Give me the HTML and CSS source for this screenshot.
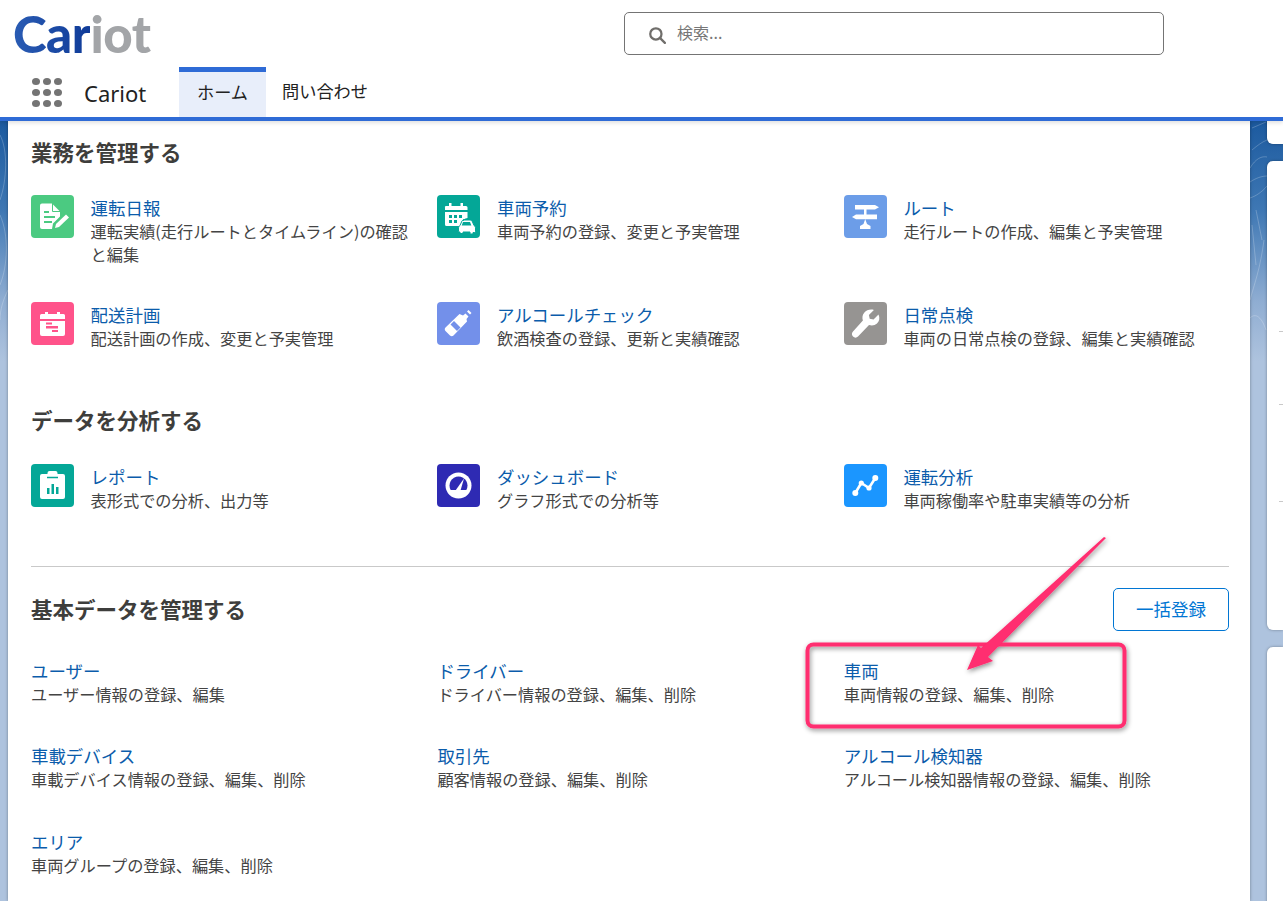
FILE: index.html
```html
<!DOCTYPE html>
<html lang="ja">
<head>
    <meta charset="UTF-8">
    <title>Cariot</title>
    <link rel="stylesheet" href="styles.css">
</head>
<body>
    <header class="header">
        <div class="top-row">
            <div class="logo"><span class="logo-blue">Car</span><span class="logo-gray">iot</span></div>
            <div class="search">
                <svg class="search-icon" viewBox="0 0 16 16"><circle cx="7" cy="7" r="5" fill="none" stroke="#706e6b" stroke-width="2"/><path d="M10.8 10.8L15 15" stroke="#706e6b" stroke-width="2" stroke-linecap="round"/></svg>
                <span class="search-text">検索...</span>
            </div>
        </div>
        <nav class="nav">
            <div class="waffle">
                <i></i><i></i><i></i><i></i><i></i><i></i><i></i><i></i><i></i>
            </div>
            <div class="app-name">Cariot</div>
            <a class="tab tab-active">ホーム</a>
            <a class="tab">問い合わせ</a>
        </nav>
    </header>

    <div class="page">
        <svg class="contours" viewBox="0 0 1283 340" preserveAspectRatio="none">
            <g fill="none" stroke="#ffffff" stroke-opacity="0.22" stroke-width="1">
                <path d="M0 135C8 150 7 180 0 200"/>
                <path d="M0 215C9 235 8 265 0 285"/>
                <path d="M8 290C3 300 0 310 0 320"/>
                <path d="M1252 150C1258 145 1262 142 1267 140"/>
                <path d="M1250 168C1256 158 1262 156 1267 157"/>
                <path d="M1250 182C1256 178 1262 176 1267 176"/>
                <path d="M1250 198C1256 196 1262 192 1267 186"/>
                <path d="M1256 210L1262 240"/>
                <path d="M1252 225L1256 265"/>
                <path d="M1264 240C1260 270 1254 285 1250 300"/>
                <path d="M1250 318C1256 312 1262 318 1266 330"/>
                <path d="M1252 128L1266 122"/>
            </g>
        </svg>

        <aside class="side-cards">
            <div class="side-card side-top"></div>
            <div class="side-card side-mid">
                <hr class="side-line side-line-1">
                <hr class="side-line side-line-2">
                <hr class="side-line side-line-3">
            </div>
            <div class="side-card side-bottom"></div>
        </aside>

        <main class="card">
            <h2 class="section-title">業務を管理する</h2>
            <div class="grid grid-tasks">
                <div class="item">
                    <span class="icon icon-green">
                        <svg viewBox="0 0 43 43"><path d="M11 8.500h10l8 8v5l-7 7-1 5.500H11a2 2 0 0 1-2-2V10.500a2 2 0 0 1 2-2z" fill="#fff"/><path d="M21.500 8v8.500H29" fill="none" stroke="#4bca81" stroke-width="1"/><path d="M13 17h5M13 22h11M13 27h8" stroke="#4bca81" stroke-width="2"/><path d="M24 33l1-4 10-9.500 3 3-10 9.500z" fill="#fff"/></svg>
                    </span>
                    <div class="item-text">
                        <a class="item-title">運転日報</a>
                        <p class="item-desc">運転実績(走行ルートとタイムライン)の確認と編集</p>
                    </div>
                </div>
                <div class="item">
                    <span class="icon icon-teal">
                        <svg viewBox="0 0 43 43"><path d="M9 11h3V8h2.500v3h9V8H26v3h3a1.500 1.500 0 0 1 1.500 1.500V15H8v-2.500A1 1 0 0 1 9 11z" fill="#fff"/><path d="M8 17h22.500v6c-3 .5-5 2-6 4l-1 4H9.500A1.500 1.500 0 0 1 8 29.500z" fill="#fff"/><path d="M12 20h3v3h-3zM17 20h3v3h-3zM22 20h3v3h-3zM12 25h3v3h-3zM17 25h3v3h-3z" fill="#04a797"/><path d="M26 25h7c1 0 2 .7 2.500 2l1.500 3.500c1 .5 1.500 1.500 1.500 2.500v3.500c0 .5-.5 1-1 1H36v1.500h-3V37h-7v1.500h-3V37h-.5c-.5 0-1-.5-1-1v-3c0-1 .5-2 1.500-2.500l1.500-3.500c.5-1.300 1-2 2.500-2z" fill="#fff" stroke="#04a797" stroke-width="1"/><path d="M26 27h7l1.300 3.500H24.700z" fill="#04a797"/></svg>
                    </span>
                    <div class="item-text">
                        <a class="item-title">車両予約</a>
                        <p class="item-desc">車両予約の登録、変更と予実管理</p>
                    </div>
                </div>
                <div class="item">
                    <span class="icon icon-sky">
                        <svg viewBox="0 0 43 43"><polygon points="11,10 31,10 35,12.300 31,14.500 11,14.500" fill="#fff"/><polygon points="12,19.500 33,19.500 33,24.300 12,24.300 8,22" fill="#fff"/><rect x="20" y="14" width="2.500" height="6" fill="#fff"/><polygon points="21.200,24 23,29 26.500,31 26.500,34 16,34 16,31 19.500,29" fill="#fff"/></svg>
                    </span>
                    <div class="item-text">
                        <a class="item-title">ルート</a>
                        <p class="item-desc">走行ルートの作成、編集と予実管理</p>
                    </div>
                </div>
                <div class="item">
                    <span class="icon icon-pink">
                        <svg viewBox="0 0 43 43"><path d="M10.500 12h3.500v-2h3v2h9v-2h3v2h3.500a1.500 1.500 0 0 1 1.500 1.500V17H9v-3.500a1.500 1.500 0 0 1 1.500-1.500z" fill="#fff"/><path d="M9 19h25v13a2 2 0 0 1-2 2H11a2 2 0 0 1-2-2z" fill="#fff"/><path d="M15 20.500h6v2h-6zM15 24h12v2.500H15zM21 28h6v2h-6z" fill="#ff538a"/></svg>
                    </span>
                    <div class="item-text">
                        <a class="item-title">配送計画</a>
                        <p class="item-desc">配送計画の作成、変更と予実管理</p>
                    </div>
                </div>
                <div class="item">
                    <span class="icon icon-periwinkle">
                        <svg viewBox="0 0 43 43"><path d="M26 13.500l2.500-2 3 3-2 2.500 .5 2.500-13.500 14c-1 1-2.500 1-3.500 0l-4.500-4.500c-1-1-1-2.500 0-3.500l14-13.500z" fill="#fff"/><path d="M30 9.500l1.500-1.500 3 3-1.500 1.500z" fill="#fff"/><path d="M17 19l6.500 6.500-3.500 3.500-6.500-6.500z" fill="#7390ea"/></svg>
                    </span>
                    <div class="item-text">
                        <a class="item-title">アルコールチェック</a>
                        <p class="item-desc">飲酒検査の登録、更新と実績確認</p>
                    </div>
                </div>
                <div class="item">
                    <span class="icon icon-gray">
                        <svg viewBox="0 0 43 43"><path d="M34.500 12.500l-5 5-3.800-.8-.8-3.800 5-5c-3.500-1-7.500 0-9.500 2.500-2 2.200-2.500 5.200-1.500 8L9 29.500c-1.500 1.500-1.500 3.500 0 5s3.500 1.500 5 0L25 23c2.800 1 5.800.5 8-1.500 2.500-2.500 3-5.500 1.500-9z" fill="#fff"/></svg>
                    </span>
                    <div class="item-text">
                        <a class="item-title">日常点検</a>
                        <p class="item-desc">車両の日常点検の登録、編集と実績確認</p>
                    </div>
                </div>
            </div>

            <h2 class="section-title title-analysis">データを分析する</h2>
            <div class="grid grid-analysis">
                <div class="item">
                    <span class="icon icon-teal">
                        <svg viewBox="0 0 43 43"><path d="M11 10h5.500V9a2 2 0 0 1 2-2h6a2 2 0 0 1 2 2v1H32a2 2 0 0 1 2 2v21a2 2 0 0 1-2 2H11a2 2 0 0 1-2-2V12a2 2 0 0 1 2-2z" fill="#fff"/><path d="M16 13.500h11" stroke="#04a797" stroke-width="1.500"/><path d="M16 24h2.500v6H16zM20.500 20h2.500v10h-2.500zM25 23h2.500v7H25z" fill="#04a797"/></svg>
                    </span>
                    <div class="item-text">
                        <a class="item-title">レポート</a>
                        <p class="item-desc">表形式での分析、出力等</p>
                    </div>
                </div>
                <div class="item">
                    <span class="icon icon-navy">
                        <svg viewBox="0 0 43 43"><circle cx="21.500" cy="21.500" r="13" fill="#fff"/><path d="M13.700 26A9 9 0 1 1 29.300 26z" fill="#2e2ab3"/><path d="M27 14.500L23.500 26.500H18.500z" fill="#fff"/></svg>
                    </span>
                    <div class="item-text">
                        <a class="item-title">ダッシュボード</a>
                        <p class="item-desc">グラフ形式での分析等</p>
                    </div>
                </div>
                <div class="item">
                    <span class="icon icon-blue">
                        <svg viewBox="0 0 43 43"><path d="M11.300 29L17.300 19L25 24L31.300 14" fill="none" stroke="#fff" stroke-width="2.600"/><circle cx="11.300" cy="29" r="3" fill="#fff"/><circle cx="17.300" cy="19" r="2.600" fill="#fff"/><circle cx="25" cy="24" r="2.600" fill="#fff"/><circle cx="31.300" cy="14" r="3" fill="#fff"/></svg>
                    </span>
                    <div class="item-text">
                        <a class="item-title">運転分析</a>
                        <p class="item-desc">車両稼働率や駐車実績等の分析</p>
                    </div>
                </div>
            </div>

            <hr class="divider">

            <div class="section-head">
                <h2 class="section-title">基本データを管理する</h2>
                <button class="bulk-btn">一括登録</button>
            </div>
            <div class="grid grid-basic">
                <div class="basic-item">
                    <a class="item-title">ユーザー</a>
                    <p class="item-desc">ユーザー情報の登録、編集</p>
                </div>
                <div class="basic-item">
                    <a class="item-title">ドライバー</a>
                    <p class="item-desc">ドライバー情報の登録、編集、削除</p>
                </div>
                <div class="basic-item">
                    <a class="item-title">車両</a>
                    <p class="item-desc">車両情報の登録、編集、削除</p>
                </div>
                <div class="basic-item">
                    <a class="item-title">車載デバイス</a>
                    <p class="item-desc">車載デバイス情報の登録、編集、削除</p>
                </div>
                <div class="basic-item">
                    <a class="item-title">取引先</a>
                    <p class="item-desc">顧客情報の登録、編集、削除</p>
                </div>
                <div class="basic-item">
                    <a class="item-title">アルコール検知器</a>
                    <p class="item-desc">アルコール検知器情報の登録、編集、削除</p>
                </div>
                <div class="basic-item">
                    <a class="item-title">エリア</a>
                    <p class="item-desc">車両グループの登録、編集、削除</p>
                </div>
            </div>
        </main>
    </div>

    <!-- 注釈 -->
    <svg class="annotation" viewBox="0 0 1283 901">
        <defs>
            <filter id="note-shadow" x="-20%" y="-20%" width="140%" height="140%">
                <feDropShadow dx="1" dy="2" stdDeviation="2.500" flood-color="#000" flood-opacity="0.45"/>
            </filter>
        </defs>
        <g filter="url(#note-shadow)" fill="#ff2d6f">
            <rect x="807.500" y="644.500" width="317" height="82" rx="6" fill="none" stroke="#ff2d6f" stroke-width="4"/>
            <polygon points="1104,537 1106,538 988,657 993,661 967,670 978,645 981,648"/>
        </g>
    </svg>
</body>
</html>
```

FILE: styles.css
```css
* {
    box-sizing: border-box;
}

html, body {
    height: 901px;
}

body {
    margin: 0;
    overflow: hidden;
    position: relative;
    font-family: "Noto Sans CJK JP", "Noto Sans", sans-serif;
    color: #3e3e3c;
    background: #fff;
}

/* ヘッダー */
.header {
    position: relative;
    z-index: 3;
    height: 121px;
    background: #fff;
    border-bottom: 4px solid #2f6bd6;
    box-shadow: 0 2px 4px rgba(0, 0, 0, 0.12);
}

.top-row {
    display: flex;
    height: 67px;
    padding-top: 12px;
}

.logo {
    width: 624px;
    padding-left: 13px;
    font-family: Lato, sans-serif;
    font-size: 51px;
    font-weight: 900;
    line-height: 44px;
    letter-spacing: -0.5px;
}

.logo-blue {
    color: transparent;
    background: linear-gradient(90deg, #2a5cb4 0%, #0f3b98 100%);
    -webkit-background-clip: text;
    background-clip: text;
}

.logo-gray {
    color: #a3a5a8;
}

.search {
    display: flex;
    align-items: center;
    width: 540px;
    height: 43px;
    padding-left: 23px;
    border: 1px solid #747474;
    border-radius: 5px;
}

.search-icon {
    width: 18px;
    height: 18px;
    margin-top: 3px;
}

.search-text {
    margin-left: 11px;
    margin-top: -3px;
    font-size: 16px;
    color: #777;
}

.nav {
    display: flex;
    height: 50px;
    padding-left: 32px;
}

.waffle {
    display: grid;
    grid-template-columns: repeat(3, 8px);
    gap: 4px 3px;
    width: 30px;
    margin-top: 11px;
    align-content: start;
}

.waffle i {
    width: 8px;
    height: 7px;
    border-radius: 50%;
    background: #747474;
}

.app-name {
    width: 95px;
    margin-left: 22px;
    padding-top: 10px;
    font-family: "Noto Sans", sans-serif;
    font-size: 22px;
    line-height: 32px;
    color: #222;
}

.tab {
    padding: 12px 16px 0;
    font-size: 17.200px;
    line-height: 24px;
    color: #222;
}

.tab-active {
    width: 87px;
    padding-left: 18px;
    background: #e8eefa;
    border-top: 5px solid #2f6bd6;
    padding-top: 8px;
}

/* 本体 */
.page {
    position: relative;
    height: 780px;
    overflow: hidden;
    padding: 0 33px 0 8px;
    background: linear-gradient(180deg, #1c5a9f 0%, #3f78b4 90px, #8fadd2 180px, #aec3de 240px);
}

.contours {
    position: absolute;
    top: -121px;
    left: 0;
    width: 1283px;
    height: 340px;
}

.card {
    position: relative;
    height: 780px;
    padding: 16px 21px 0 23px;
    background: #fff;
    box-shadow: 0 0 3px rgba(0, 0, 0, 0.35);
}

.section-title {
    margin: 0;
    font-size: 21.500px;
    font-weight: 700;
    line-height: 30px;
    color: #3e3e3c;
}

.grid {
    display: grid;
    grid-template-columns: repeat(3, 386px);
    column-gap: 20.400px;
    margin-top: 28px;
}

.grid-tasks {
    row-gap: 37px;
}

.title-analysis {
    margin-top: 55.500px;
}

.grid-analysis {
    margin-top: 29px;
}

.item {
    display: flex;
    gap: 16.600px;
}

.icon {
    flex: none;
    width: 43px;
    height: 43px;
    border-radius: 4px;
}

.icon svg {
    display: block;
    width: 43px;
    height: 43px;
}

.icon-green { background: #4bca81; }
.icon-teal { background: #04a797; }
.icon-sky { background: #6c9de8; }
.icon-pink { background: #ff538a; }
.icon-periwinkle { background: #7390ea; }
.icon-gray { background: #969492; }
.icon-navy { background: #2e2ab3; }
.icon-blue { background: #1b96ff; }

.item-text {
    min-width: 0;
    padding-top: 1px;
}

.item-title {
    display: block;
    font-size: 17.450px;
    line-height: 24px;
    color: #0b5cab;
}

.item-desc {
    margin: 0;
    font-size: 16.200px;
    line-height: 22.500px;
    color: #444;
}

.divider {
    height: 1px;
    margin: 54.500px 0 21px;
    border: none;
    background: #c9c9c9;
}

.section-head {
    display: flex;
    justify-content: space-between;
    align-items: center;
}

.section-head .section-title {
    margin-bottom: 2px;
}

.bulk-btn {
    width: 116px;
    height: 43px;
    padding: 0 0 2px;
    font-family: inherit;
    font-size: 17.500px;
    color: #0176d3;
    background: #fff;
    border: 1px solid #0176d3;
    border-radius: 5px;
}

.grid-basic {
    margin-top: 27.700px;
    row-gap: 39px;
}

/* 右側のカード */
.side-cards {
    position: absolute;
    top: 0;
    left: 1267px;
    width: 16px;
    height: 780px;
}

.side-card {
    position: relative;
    background: #fff;
    border-radius: 6px 0 0 6px;
    box-shadow: 0 0 3px rgba(0, 0, 0, 0.35);
}

.side-top {
    height: 23px;
    border-top-left-radius: 0;
}

.side-mid {
    height: 469px;
    margin-top: 17px;
}

.side-bottom {
    height: 260px;
    margin-top: 17px;
}

.side-line {
    position: absolute;
    left: 12px;
    width: 4px;
    height: 1px;
    margin: 0;
    border: none;
    background: #c9c9c9;
}

.side-line-1 { top: 170px; }
.side-line-2 { top: 243px; }
.side-line-3 { top: 340px; }

/* 注釈 */
.annotation {
    position: absolute;
    top: 0;
    left: 0;
    z-index: 4;
    width: 1283px;
    height: 901px;
    pointer-events: none;
}
```
